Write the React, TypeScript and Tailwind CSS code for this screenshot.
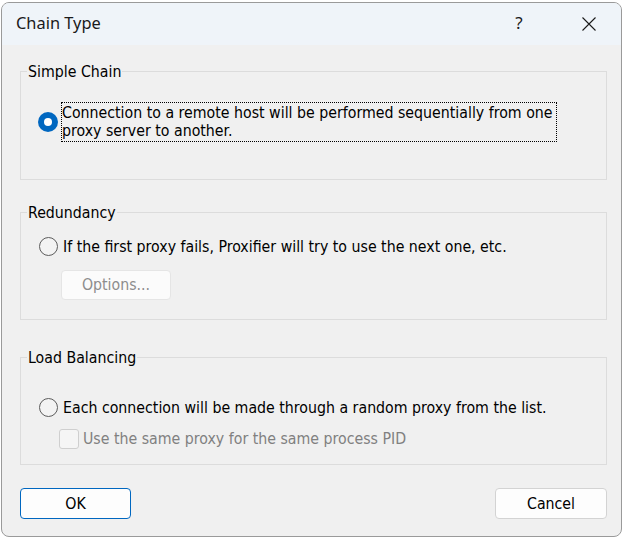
import React from "react";

const body = "font-['DejaVu_Sans_Condensed','DejaVu_Sans',sans-serif] [font-stretch:condensed] text-[15.75px] leading-[18px]";

function Radio({ checked }: { checked?: boolean }) {
  if (checked) {
    return (
      <div className="w-[20px] h-[20px] rounded-full bg-[#0067c0] flex items-center justify-center shrink-0">
        <div className="w-[8px] h-[8px] rounded-full bg-white" />
      </div>
    );
  }
  return <div className="w-[19px] h-[19px] rounded-full border border-[#5c5c5c] bg-[#f3f3f3] shrink-0" />;
}

function Group({ label, h, children }: { label: string; h: string; children: React.ReactNode }) {
  return (
    <div className={`relative w-[587px] border border-[#dcdcdc] ${h}`}>
      <div className={`absolute left-[6px] top-[-9px] px-[1px] bg-[#f0f0f0] text-black ${body}`}>{label}</div>
      {children}
    </div>
  );
}

export default function App() {
  return (
    <div className="w-[624px] h-[538px] bg-white overflow-hidden">
      <div className="h-[2px] overflow-hidden relative">
        <div className="absolute left-[6px] top-[-11px] flex text-[13px] leading-[14px] text-black font-['Liberation_Sans',sans-serif]">
          <span className="w-[243px]">127.0.0.1</span>
          <span className="w-[111px]">10080</span>
          <span>SOCKS5</span>
        </div>
      </div>
      <div className="ml-[1px] w-[621px] h-[535px] rounded-[8px] border border-[#9a9a9a] overflow-hidden flex flex-col bg-[#f0f0f0]">
        <div className="h-[42px] shrink-0 bg-[#eff4f9] flex items-center pl-[14px] pr-[10px] font-['Noto_Sans',sans-serif] text-[16.4px] text-[#1a1a1a]">
          <span className="pb-[2px]">Chain Type</span>
          <span className="ml-auto w-[40px] text-center pb-[2px] text-[17px]">?</span>
          <span className="ml-[28px] w-[44px] flex items-center justify-center">
            <svg width="16" height="16" viewBox="0 0 16 16">
              <path d="M1.5 1.5 L14.5 14.5 M14.5 1.5 L1.5 14.5" stroke="#1a1a1a" strokeWidth="1.1" fill="none" />
            </svg>
          </span>
        </div>
        <div className={`flex-1 pl-[18px] ${body} text-black`}>
          <div className="mt-[26px]">
            <Group label="Simple Chain" h="h-[109px]">
              <div className="pt-[30px] pl-[17px] flex items-center gap-[3px]">
                <Radio checked />
                <div className="w-[496px] border border-dotted border-black py-[1px] whitespace-nowrap">
                  Connection to a remote host will be performed sequentially from one
                  <br />
                  proxy server to another.
                </div>
              </div>
            </Group>
          </div>
          <div className="mt-[32px]">
            <Group label="Redundancy" h="h-[108px]">
              <div className="pt-[24px] pl-[18px] flex items-center gap-[5px]">
                <Radio />
                <span className="whitespace-nowrap">If the first proxy fails, Proxifier will try to use the next one, etc.</span>
              </div>
              <div className="pl-[40px] mt-[14px]">
                <div className="w-[110px] h-[30px] rounded-[4px] border border-[#e5e5e5] bg-[#fbfbfb] flex items-center justify-center text-[#8d8d8d]">
                  Options...
                </div>
              </div>
            </Group>
          </div>
          <div className="mt-[37px]">
            <Group label="Load Balancing" h="h-[108px]">
              <div className="pt-[40px] pl-[18px] flex items-center gap-[5px]">
                <Radio />
                <span className="whitespace-nowrap">Each connection will be made through a random proxy from the list.</span>
              </div>
              <div className="pl-[38px] mt-[12px] flex items-center gap-[4px]">
                <div className="w-[20px] h-[20px] rounded-[3px] border border-[#cfcfcf] bg-[#f5f5f5] shrink-0" />
                <span className="whitespace-nowrap text-[#808080]">Use the same proxy for the same process PID</span>
              </div>
            </Group>
          </div>
          <div className="mt-[23px] flex w-[587px] justify-between">
            <div className="w-[111px] h-[31px] rounded-[4px] border border-[#0067c0] bg-[#fdfdfd] flex items-center justify-center">OK</div>
            <div className="w-[112px] h-[31px] rounded-[4px] border border-[#d3d3d3] bg-[#fdfdfd] flex items-center justify-center">Cancel</div>
          </div>
        </div>
      </div>
    </div>
  );
}
